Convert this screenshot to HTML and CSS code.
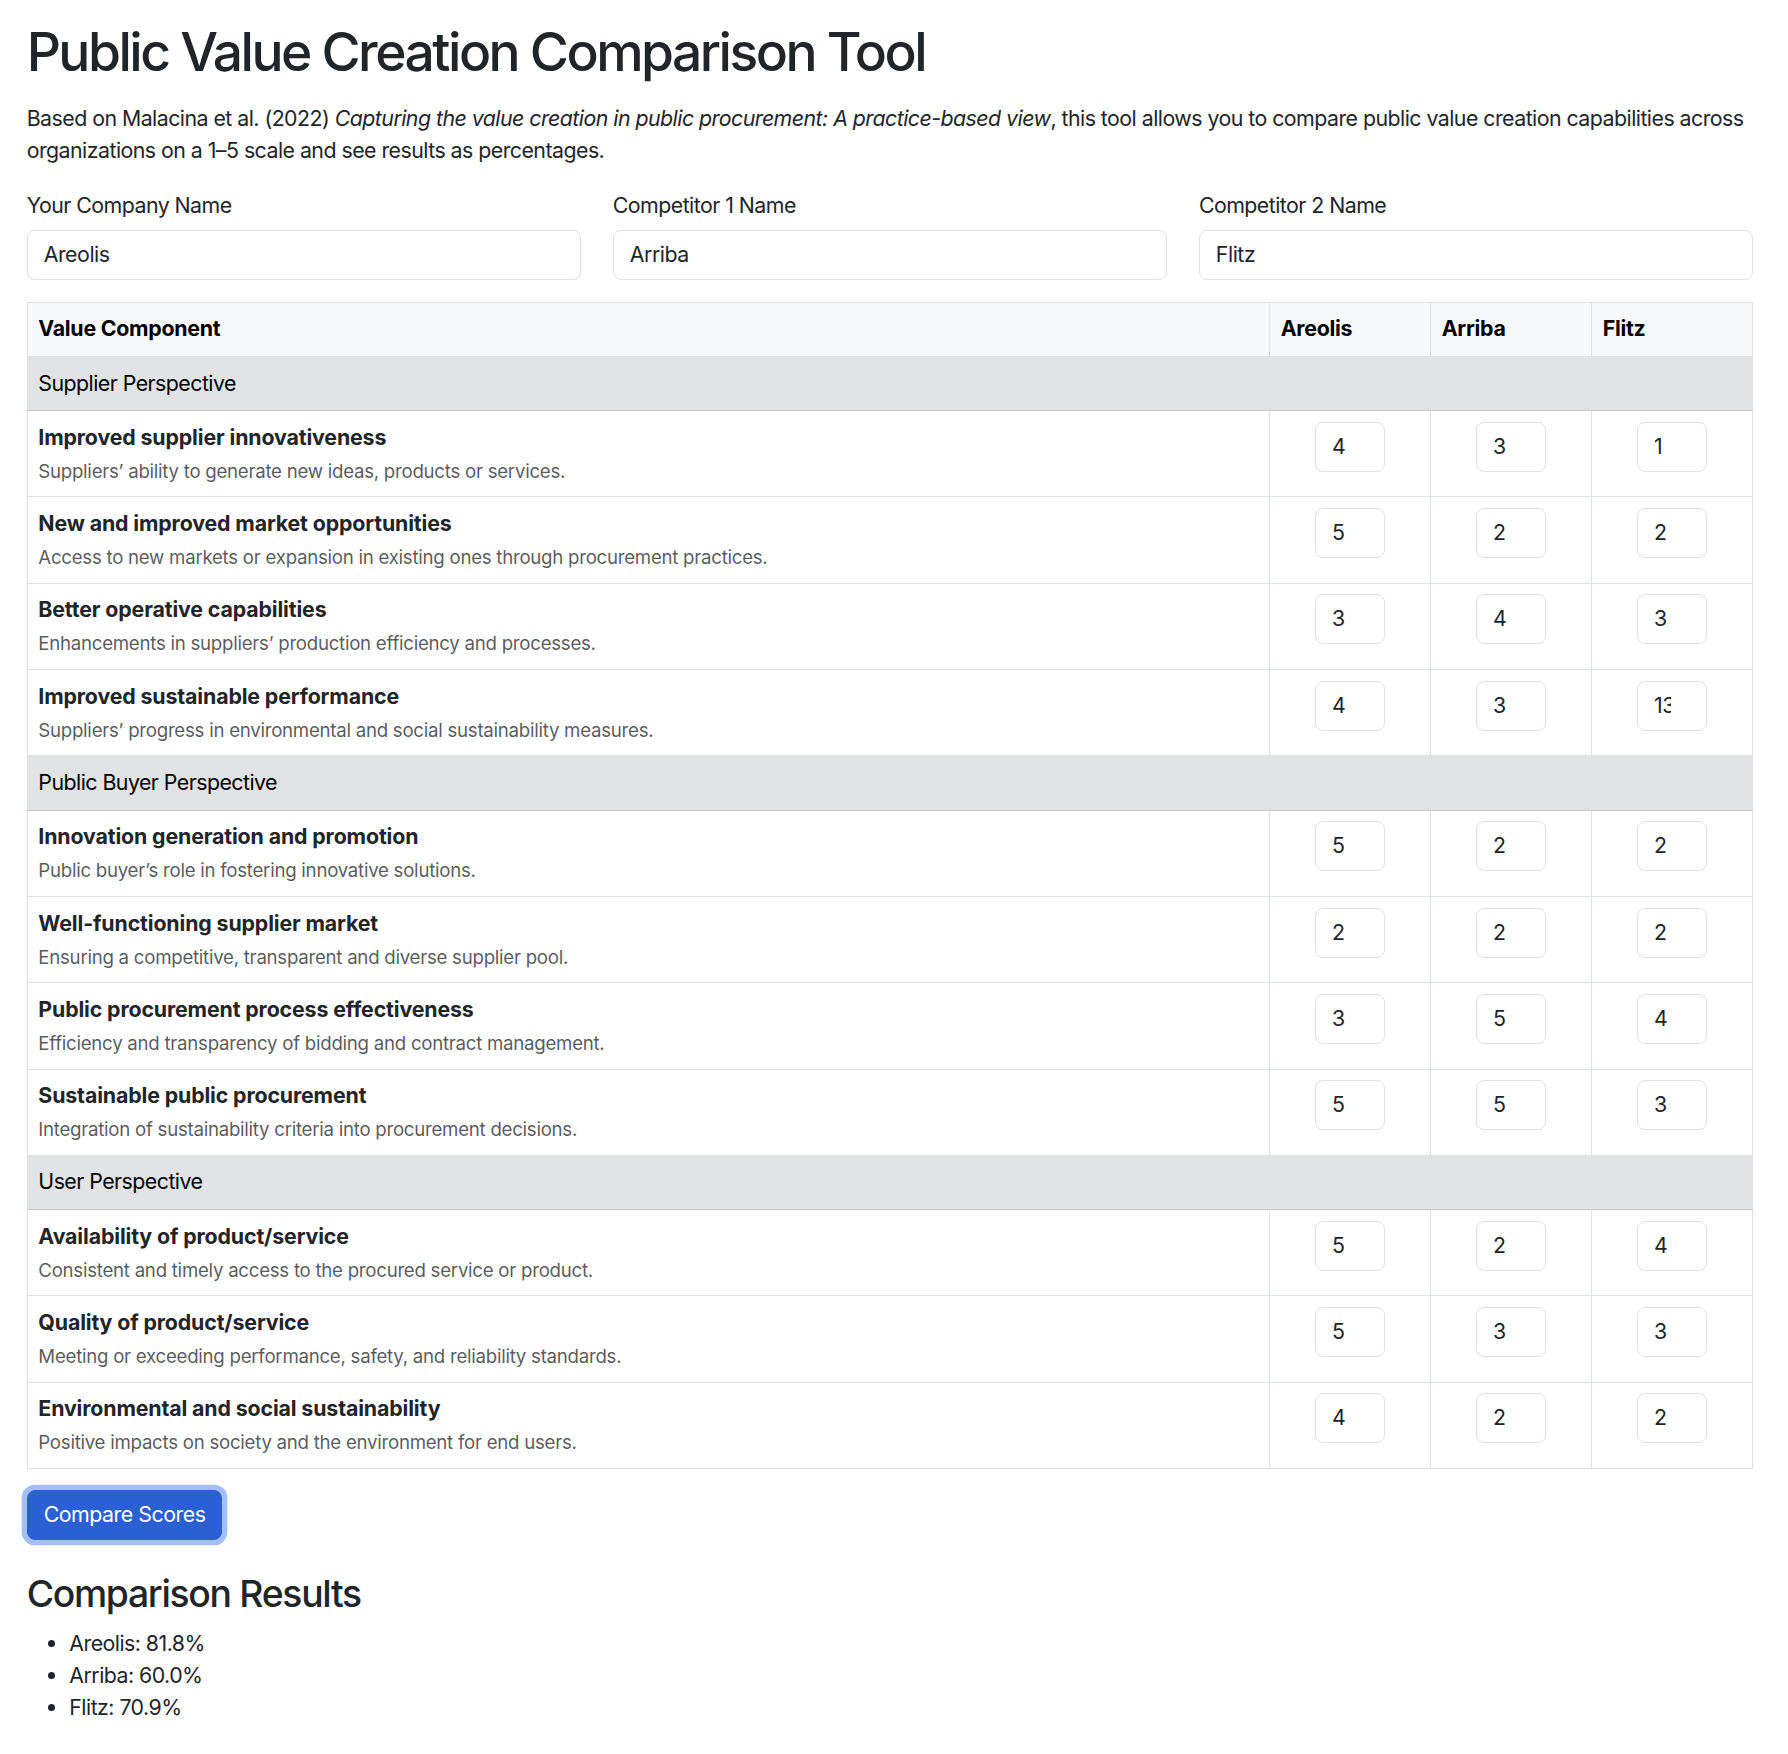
FILE: index.html
```html
<!DOCTYPE html>
<html lang="en">
<head>
<meta charset="utf-8">
<title>Public Value Creation Comparison Tool</title>
<link rel="stylesheet" href="styles.css">
</head>
<body>
<div class="page">
  <h1 class="title">Public Value Creation Comparison Tool</h1>
  <p class="intro">Based on Malacina et al. (2022) <em>Capturing the value creation in public procurement: A practice-based view</em>, this tool allows you to compare public value creation capabilities across organizations on a 1–5 scale and see results as percentages.</p>

  <div class="names">
    <div class="field">
      <label class="label" for="c0">Your Company Name</label>
      <input class="control" id="c0" type="text" value="Areolis">
    </div>
    <div class="field">
      <label class="label" for="c1">Competitor 1 Name</label>
      <input class="control" id="c1" type="text" value="Arriba">
    </div>
    <div class="field">
      <label class="label" for="c2">Competitor 2 Name</label>
      <input class="control" id="c2" type="text" value="Flitz">
    </div>
  </div>

  <table class="grid">
    <colgroup>
      <col>
      <col class="score-col">
      <col class="score-col">
      <col class="score-col">
    </colgroup>
    <thead>
      <tr class="head-row">
        <th>Value Component</th>
        <th>Areolis</th>
        <th>Arriba</th>
        <th>Flitz</th>
      </tr>
    </thead>
    <tbody>
      <tr class="section"><td colspan="4">Supplier Perspective</td></tr>
      <tr>
        <td><div class="item-title">Improved supplier innovativeness</div><div class="item-desc">Suppliers’ ability to generate new ideas, products or services.</div></td>
        <td class="score"><input class="control num" type="number" min="1" max="5" value="4"></td>
        <td class="score"><input class="control num" type="number" min="1" max="5" value="3"></td>
        <td class="score"><input class="control num" type="number" min="1" max="5" value="1"></td>
      </tr>
      <tr>
        <td><div class="item-title">New and improved market opportunities</div><div class="item-desc">Access to new markets or expansion in existing ones through procurement practices.</div></td>
        <td class="score"><input class="control num" type="number" min="1" max="5" value="5"></td>
        <td class="score"><input class="control num" type="number" min="1" max="5" value="2"></td>
        <td class="score"><input class="control num" type="number" min="1" max="5" value="2"></td>
      </tr>
      <tr>
        <td><div class="item-title">Better operative capabilities</div><div class="item-desc">Enhancements in suppliers’ production efficiency and processes.</div></td>
        <td class="score"><input class="control num" type="number" min="1" max="5" value="3"></td>
        <td class="score"><input class="control num" type="number" min="1" max="5" value="4"></td>
        <td class="score"><input class="control num" type="number" min="1" max="5" value="3"></td>
      </tr>
      <tr>
        <td><div class="item-title">Improved sustainable performance</div><div class="item-desc">Suppliers’ progress in environmental and social sustainability measures.</div></td>
        <td class="score"><input class="control num" type="number" min="1" max="5" value="4"></td>
        <td class="score"><input class="control num" type="number" min="1" max="5" value="3"></td>
        <td class="score"><input class="control num" type="number" min="1" max="5" value="13"></td>
      </tr>
      <tr class="section"><td colspan="4">Public Buyer Perspective</td></tr>
      <tr>
        <td><div class="item-title">Innovation generation and promotion</div><div class="item-desc">Public buyer’s role in fostering innovative solutions.</div></td>
        <td class="score"><input class="control num" type="number" min="1" max="5" value="5"></td>
        <td class="score"><input class="control num" type="number" min="1" max="5" value="2"></td>
        <td class="score"><input class="control num" type="number" min="1" max="5" value="2"></td>
      </tr>
      <tr>
        <td><div class="item-title">Well-functioning supplier market</div><div class="item-desc">Ensuring a competitive, transparent and diverse supplier pool.</div></td>
        <td class="score"><input class="control num" type="number" min="1" max="5" value="2"></td>
        <td class="score"><input class="control num" type="number" min="1" max="5" value="2"></td>
        <td class="score"><input class="control num" type="number" min="1" max="5" value="2"></td>
      </tr>
      <tr>
        <td><div class="item-title">Public procurement process effectiveness</div><div class="item-desc">Efficiency and transparency of bidding and contract management.</div></td>
        <td class="score"><input class="control num" type="number" min="1" max="5" value="3"></td>
        <td class="score"><input class="control num" type="number" min="1" max="5" value="5"></td>
        <td class="score"><input class="control num" type="number" min="1" max="5" value="4"></td>
      </tr>
      <tr>
        <td><div class="item-title">Sustainable public procurement</div><div class="item-desc">Integration of sustainability criteria into procurement decisions.</div></td>
        <td class="score"><input class="control num" type="number" min="1" max="5" value="5"></td>
        <td class="score"><input class="control num" type="number" min="1" max="5" value="5"></td>
        <td class="score"><input class="control num" type="number" min="1" max="5" value="3"></td>
      </tr>
      <tr class="section"><td colspan="4">User Perspective</td></tr>
      <tr>
        <td><div class="item-title">Availability of product/service</div><div class="item-desc">Consistent and timely access to the procured service or product.</div></td>
        <td class="score"><input class="control num" type="number" min="1" max="5" value="5"></td>
        <td class="score"><input class="control num" type="number" min="1" max="5" value="2"></td>
        <td class="score"><input class="control num" type="number" min="1" max="5" value="4"></td>
      </tr>
      <tr>
        <td><div class="item-title">Quality of product/service</div><div class="item-desc">Meeting or exceeding performance, safety, and reliability standards.</div></td>
        <td class="score"><input class="control num" type="number" min="1" max="5" value="5"></td>
        <td class="score"><input class="control num" type="number" min="1" max="5" value="3"></td>
        <td class="score"><input class="control num" type="number" min="1" max="5" value="3"></td>
      </tr>
      <tr>
        <td><div class="item-title">Environmental and social sustainability</div><div class="item-desc">Positive impacts on society and the environment for end users.</div></td>
        <td class="score"><input class="control num" type="number" min="1" max="5" value="4"></td>
        <td class="score"><input class="control num" type="number" min="1" max="5" value="2"></td>
        <td class="score"><input class="control num" type="number" min="1" max="5" value="2"></td>
      </tr>
    </tbody>
  </table>

  <button class="btn-primary" type="button">Compare Scores</button>

  <h3 class="results-title">Comparison Results</h3>
  <ul class="results">
    <li>Areolis: 81.8%</li>
    <li>Arriba: 60.0%</li>
    <li>Flitz: 70.9%</li>
  </ul>
</div>
</body>
</html>
```

FILE: styles.css
```css
html {
  font-size: 21.333px;
}

* {
  box-sizing: border-box;
}

body {
  margin: 0;
  font-family: Inter, "Noto Sans", "Liberation Sans", sans-serif;
  font-size: 1rem;
  line-height: 1.5;
  letter-spacing: -0.025em;
  color: #212529;
  background: #fff;
}

.page {
  padding: 20px 35px 0 26.67px;
}

.title {
  margin: 0 0 19px;
  font-size: 2.5rem;
  font-weight: 500;
  line-height: 1.2;
  letter-spacing: -0.047em;
}

.intro {
  margin: 0 0 1rem;
}

.names {
  display: grid;
  grid-template-columns: repeat(3, 1fr);
  column-gap: 32px;
  margin-bottom: 1rem;
}

.label {
  display: block;
  margin-bottom: 8px;
  padding-top: 2px;
}

.control {
  display: block;
  width: 100%;
  padding: 0.375rem 0.75rem;
  font: inherit;
  font-size: 1rem;
  line-height: 1.5;
  letter-spacing: -0.022em;
  color: #212529;
  background: #fff;
  border: 1.333px solid #dee2e6;
  border-radius: 0.375rem;
  outline: none;
}

.grid {
  width: 100%;
  table-layout: fixed;
  border-collapse: collapse;
  margin-bottom: 1rem;
  border: 1.333px solid #dee2e6;
}

.score-col {
  width: 161px;
}

.grid th,
.grid td {
  padding: 0.5rem;
  border: 1.333px solid #dee2e6;
  vertical-align: top;
  text-align: left;
}

.head-row th {
  background: #f8f9fa;
  color: #000;
  font-weight: 700;
  letter-spacing: -0.012em;
}

.section td {
  background: #e2e3e5;
  color: #000;
  border-bottom-color: #c6c7c9;
}

.item-title {
  font-weight: 700;
  letter-spacing: -0.006em;
}

.item-desc {
  margin-top: 4px;
  font-size: 0.875rem;
  line-height: 28px;
  letter-spacing: -0.014em;
  color: rgba(33, 37, 41, 0.75);
}

.score {
  text-align: center;
}

.num {
  width: 70px;
  margin: 0 auto;
  padding-right: 35px;
  -moz-appearance: textfield;
  appearance: textfield;
}

.num::-webkit-inner-spin-button,
.num::-webkit-outer-spin-button {
  -webkit-appearance: none;
  margin: 0;
  display: none;
}

.btn-primary {
  display: inline-block;
  padding: 0.375rem 0.75rem;
  font: inherit;
  font-size: 1rem;
  line-height: 1.5;
  letter-spacing: -0.022em;
  color: #fff;
  background: #2b5fd4;
  border: 1.333px solid #2b5fd4;
  border-radius: 0.375rem;
  box-shadow: 0 0 0 5.33px #a2bff8;
}

.results-title {
  margin: 32px 0 0.5rem;
  font-size: 1.75rem;
  font-weight: 500;
  line-height: 1.2;
  letter-spacing: -0.035em;
}

.results {
  margin: 0 0 1rem;
  padding-left: 2rem;
}
```
